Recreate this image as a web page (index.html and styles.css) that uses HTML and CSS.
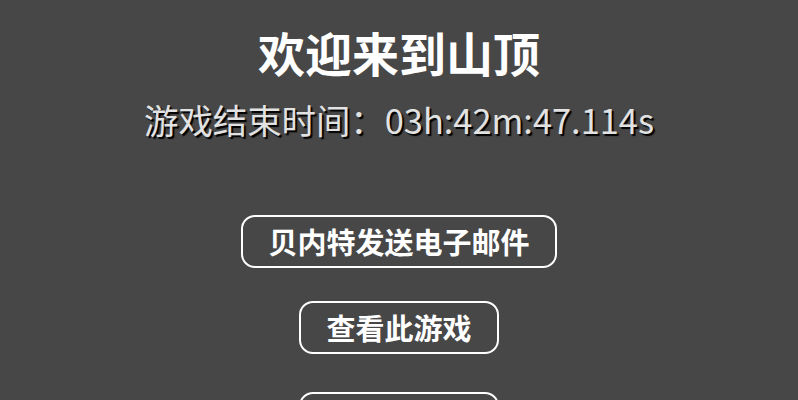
FILE: index.html
```html
<!DOCTYPE html>
<html lang="zh-CN">
<head>
<meta charset="utf-8">
<title>欢迎来到山顶</title>
<link rel="stylesheet" href="styles.css">
</head>
<body>
<main class="page">
  <h1 class="title">欢迎来到山顶</h1>
  <p class="time">游戏结束时间：03h:42m:47.114s</p>
  <div class="actions">
    <button class="btn btn-mail">贝内特发送电子邮件</button>
    <button class="btn btn-view">查看此游戏</button>
    <button class="btn btn-again">重新玩游戏</button>
  </div>
</main>
</body>
</html>
```

FILE: styles.css
```css
html, body {
  margin: 0;
  padding: 0;
  background: #474747;
}
body {
  font-family: "Noto Sans CJK SC", "Noto Sans", sans-serif;
  color: #ffffff;
}
.page {
  display: flex;
  flex-direction: column;
  align-items: center;
  padding-top: 20px;
}
.title {
  margin: 0;
  font-size: 47px;
  line-height: 64px;
  font-weight: 700;
  color: #ffffff;
}
.time {
  margin: 11px 0 0;
  font-size: 34.4px;
  line-height: 48px;
  font-weight: 400;
  color: #e2e2e2;
  text-shadow: 2px 2px 1px #000000;
}
.actions {
  display: flex;
  flex-direction: column;
  align-items: center;
  margin-top: 72px;
}
.btn {
  font-family: "Noto Sans CJK SC", "Noto Sans", sans-serif;
  font-size: 29px;
  font-weight: 700;
  line-height: 49px;
  color: #ffffff;
  background: transparent;
  border: 2px solid #ffffff;
  border-radius: 14px;
  padding: 0 25px;
  margin: 0;
}
.btn-view {
  margin-top: 33px;
}
.btn-again {
  margin-top: 38px;
}
```
